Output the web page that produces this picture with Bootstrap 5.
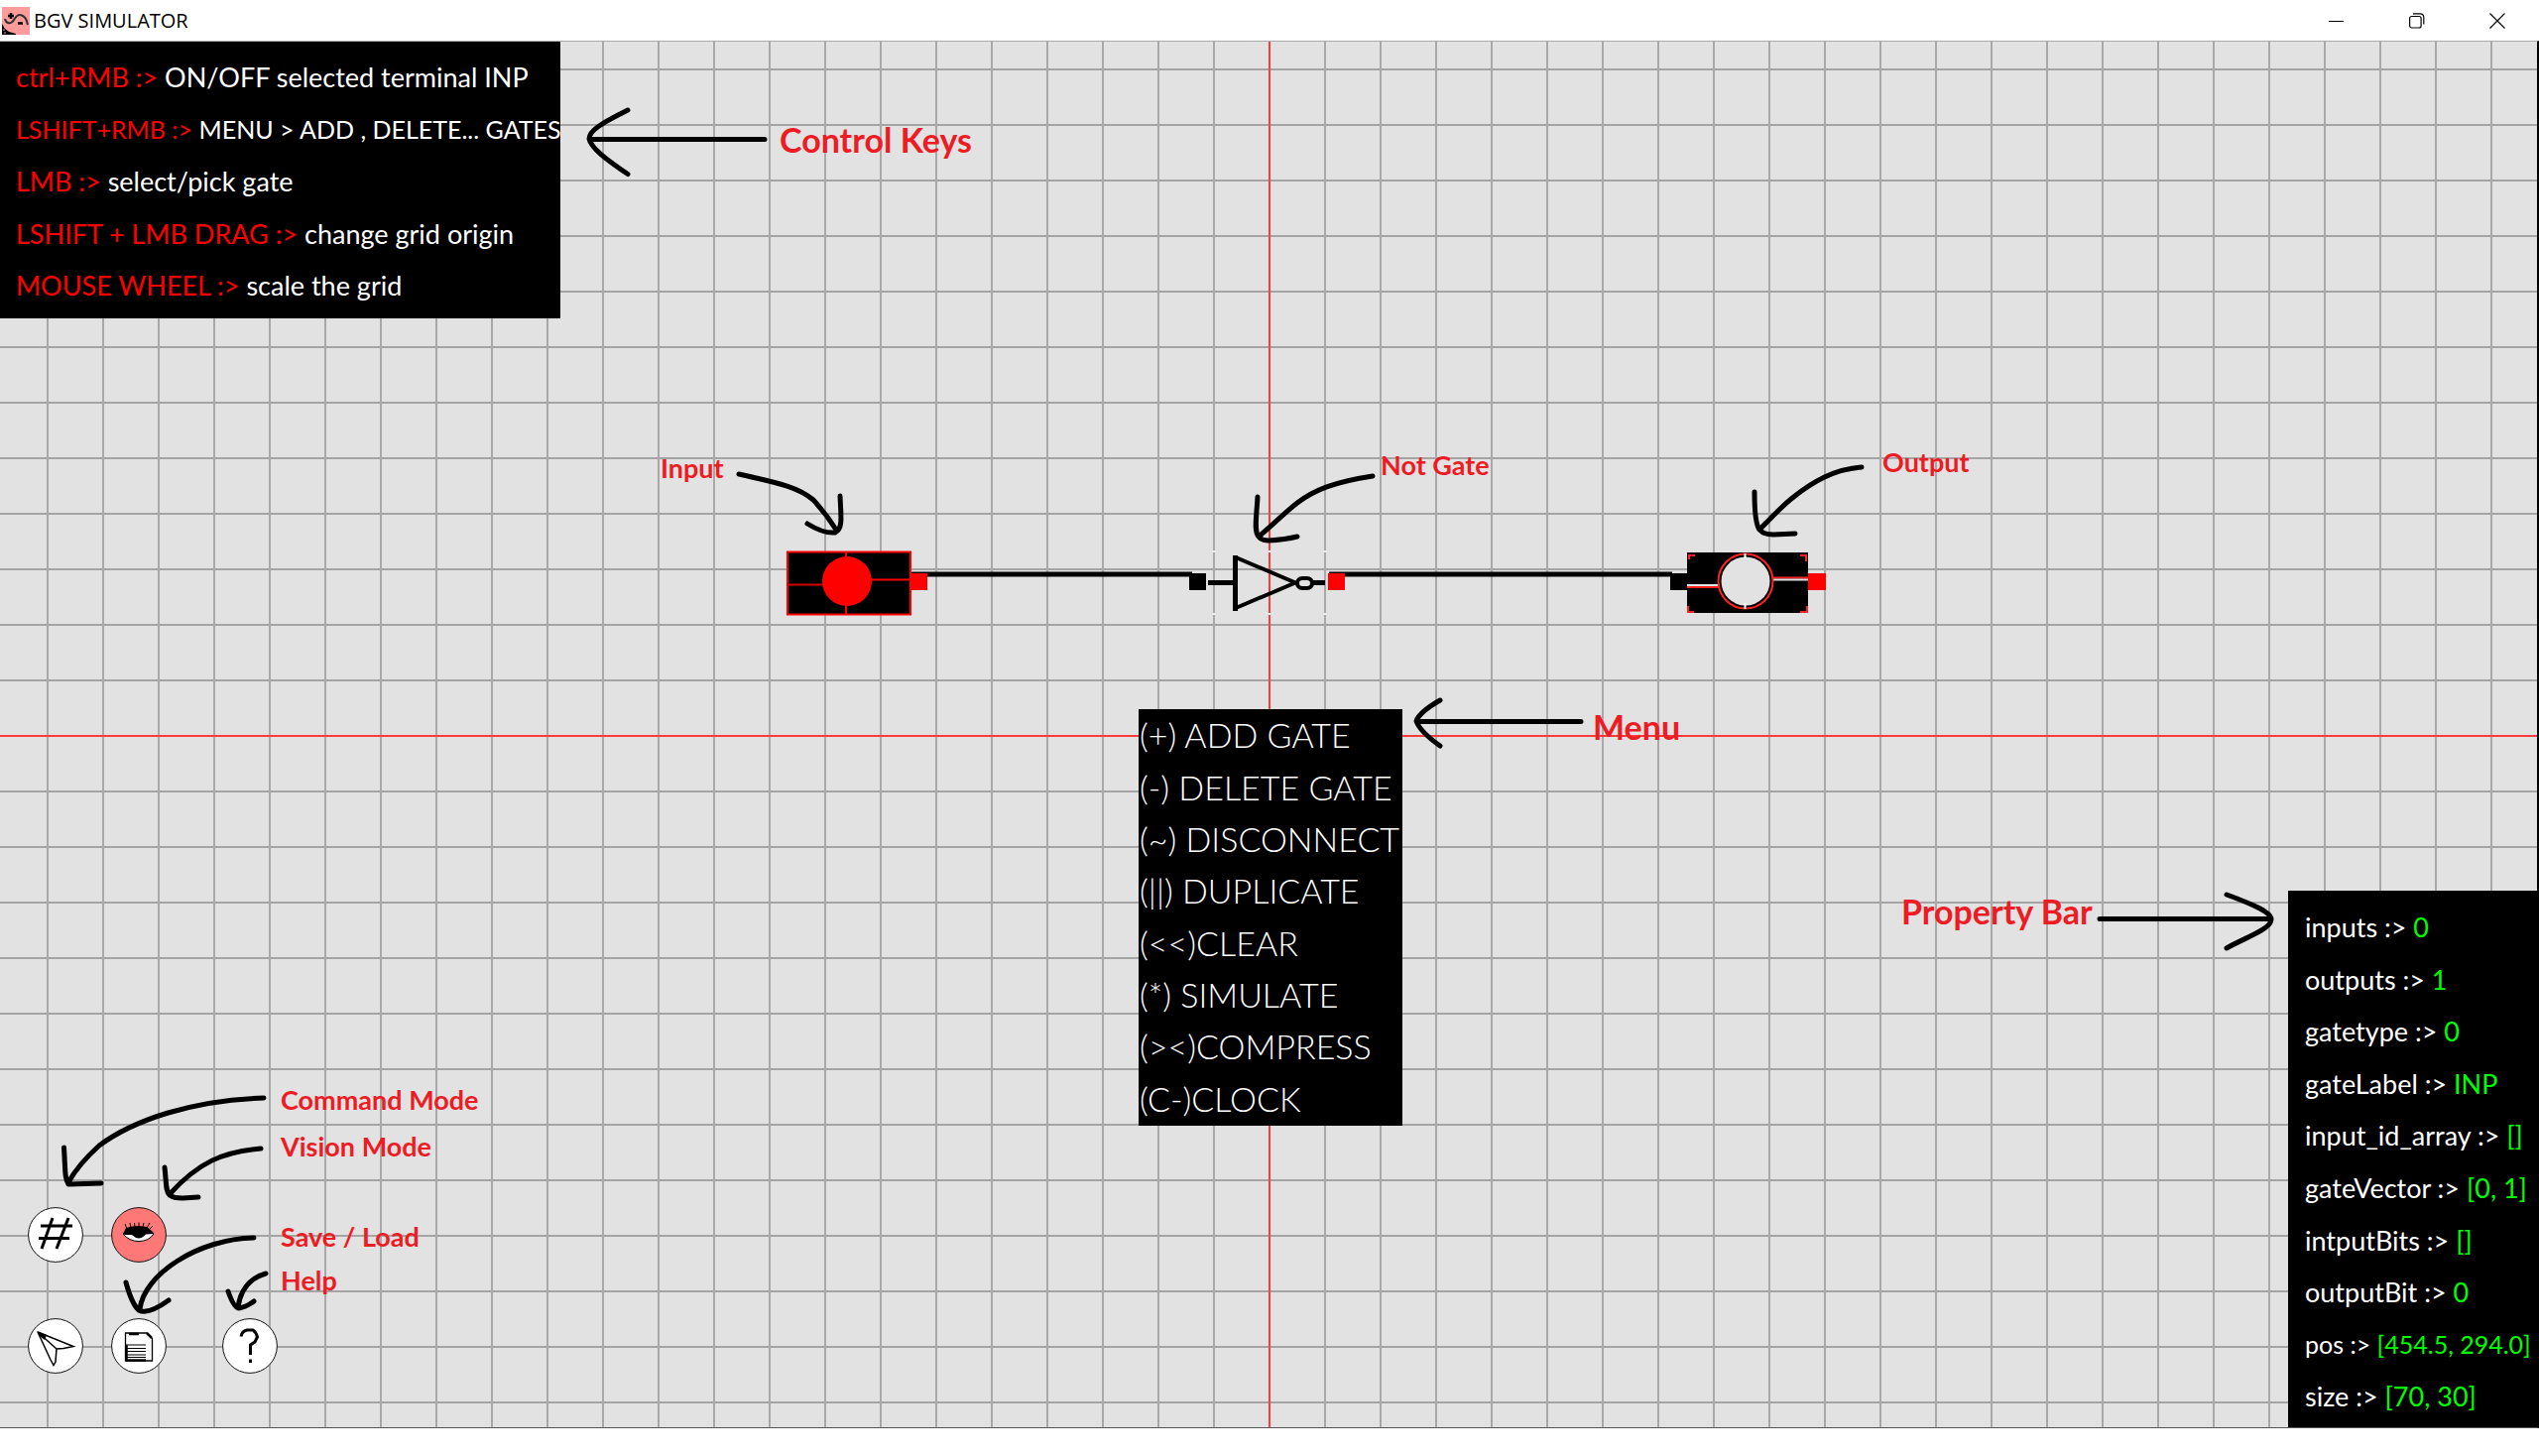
<!DOCTYPE html>
<html lang="en">
<head>
<meta charset="utf-8">
<meta name="viewport" content="width=device-width, initial-scale=1">
<title>BGV SIMULATOR</title>
<link rel="stylesheet" href="https://cdn.jsdelivr.net/npm/bootstrap@5.3.0/dist/css/bootstrap.min.css">
<style>
  body { font-family: Lato, "Open Sans", sans-serif; color: #000; }
  .titlebar { height: 41px; padding: 0 2px; font-family: "Open Sans", sans-serif; font-size: 20px; }
  .win-btn { width: 81px; height: 39px; }
  .desk-strip { height: 28px; }

  .sim-canvas {
    border-right: 2px solid #000;
    border-bottom: 1px solid #555;
    border-top: 1px solid #aaa;
    background-color: #e2e2e2;
    background-origin: border-box;
    background-clip: border-box;
    background-image:
      linear-gradient(#ff3c3c, #ff3c3c),
      linear-gradient(#ff3c3c, #ff3c3c),
      linear-gradient(90deg, transparent 27px, #a8a8a8 27px, #a8a8a8 29px, transparent 29px),
      linear-gradient(transparent 27px, #a4a4a4 27px, #a4a4a4 29px, transparent 29px);
    background-size: 2px 100%, 100% 2px, 56px 56px, 56px 56px;
    background-position: 50% 0, 0 700px, 50% 1px, 50% 1px;
    background-repeat: no-repeat, no-repeat, repeat, repeat;
  }

  .hud { background: #000; color: #fff; font-weight: 400; font-size: 27px; white-space: nowrap; }
  .hud-line { display: flex; align-items: center; flex: 1 1 0; white-space: pre; margin: 0; }
  .hud-long { font-size: 25px; }
  .hud-keys { top: -1px; left: 0; width: 565px; height: 280px; padding: 11px 0 6px 16px; }
  .hud-keys b { font-weight: 400; color: #f00; }
  .hud-props { right: -2px; bottom: 0; width: 253px; height: 541px; padding: 11px 0 4px 17px; }
  .hud-props b { font-weight: 400; color: #0f0; }
  .hud-menu { left: calc(50% - 131px); top: 673px; width: 266px; height: 420px; font-size: 34px; font-weight: 300; padding: 0 0 1px 1px; }
  .hud-menu button { border: 0; padding: 0; background: none; color: inherit; font: inherit; text-align: left; line-height: 1; }
  .hud-menu button:hover { color: #ff7878; }

  .tools { left: 28px; bottom: 54px; gap: 56px; }
  .tool-row { gap: 28px; }
  .tool { width: 56px; height: 56px; padding: 0; border: 0; background: none; border-radius: 50%; }
  .tool-help { margin-left: 28px; }
  .tool svg { display: block; }

  .notes { overflow: visible; pointer-events: none; }
  .notes text { fill: #ed1c24; font-weight: 700; font-size: 27px; }
  .notes .note-lg { font-size: 34px; }
  .ink { fill: none; stroke: #000; stroke-width: 5; stroke-linecap: round; stroke-linejoin: round; }
  .notes-scene { left: calc(50% - 639px); top: 399px; }
  .notes-keys { left: 580px; top: 49px; }
  .notes-props { right: 268px; bottom: 470px; }
  .notes-tools { left: 40px; bottom: 100px; }
</style>
<script src="https://cdn.jsdelivr.net/npm/bootstrap@5.3.0/dist/js/bootstrap.bundle.min.js"></script>
</head>
<body class="d-flex flex-column vh-100 bg-white overflow-hidden">

<header class="titlebar d-flex align-items-start bg-white">
  <div class="d-flex align-items-center h-100 me-auto">
    <svg width="28" height="28" viewBox="0 0 28 28" aria-hidden="true">
      <rect width="28" height="28" fill="#ff9b9b"/>
      <path d="M3 12C4 17 9 18 12 13S17 7 21 9S25 15 26 18" fill="none" stroke="#333" stroke-width="2"/>
      <path d="M9 6V12M6 9H12M16 16.500H21" stroke="#000" stroke-width="2.500"/>
      <path d="M0 17L3 22L7 25L14 27V28H0Z"/>
      <path d="M1 23H3M2 26H4" stroke="#ff9b9b"/>
    </svg>
    <span class="ms-1">BGV SIMULATOR</span>
  </div>
  <button class="win-btn btn p-0 border-0" aria-label="Minimize"><svg width="16" height="16" viewBox="0 0 16 16"><path d="M0 8.500H15" stroke="#000"/></svg></button>
  <button class="win-btn btn p-0 border-0" aria-label="Restore"><svg width="16" height="16" viewBox="0 0 16 16" fill="none" stroke="#000" stroke-width="1.200"><rect x=".6" y="3.500" width="11.500" height="11.500" rx="2"/><path d="M4 .8H11Q14.800 .8 14.800 4.500V11.500"/></svg></button>
  <button class="win-btn btn p-0 border-0" aria-label="Close"><svg width="16" height="16" viewBox="0 0 16 16"><path d="M.5 .5L15.500 15.500M15.500 .5L.5 15.500" stroke="#000" stroke-width="1.200"/></svg></button>
</header>

<main class="sim-canvas position-relative flex-fill overflow-hidden">

  <!-- circuit with its callouts -->
  <svg class="notes notes-scene position-absolute" width="1400" height="400" viewBox="640 441 1400 400">
    <path d="M918 579H1202M1340 579H1686" stroke="#000" stroke-width="5"/>

    <rect x="794" y="556.500" width="124" height="63" fill="#000" stroke="#f00" stroke-width="2"/>
    <path d="M853 557V619M854 584.500H918" stroke="#f00" stroke-width="2"/>
    <path d="M794 589.500H840" stroke="#d00000" stroke-width="2"/>
    <circle cx="854" cy="586" r="25" fill="#f00"/>
    <rect x="918" y="578" width="17" height="17" fill="#f00"/>

    <path d="M1224 555V557M1280 555V557M1336 555V557M1224 618V620M1280 618V620M1336 618V620" stroke="#eee" stroke-width="3"/>
    <rect x="1199" y="578" width="17" height="17"/>
    <path d="M1218 587.500H1244M1324 587.500H1336" stroke="#000" stroke-width="5"/>
    <path d="M1246 562L1306 587.500L1246 613" fill="none" stroke="#000" stroke-width="4"/>
    <path d="M1245.500 560V616" stroke="#000" stroke-width="5"/>
    <rect x="1308" y="583" width="15" height="10" rx="5" fill="#e2e2e2" stroke="#000" stroke-width="4"/>
    <rect x="1339" y="578" width="17" height="17" fill="#f00"/>

    <rect x="1684" y="578" width="17" height="17"/>
    <rect x="1701" y="557" width="122" height="61"/>
    <path d="M1701 592H1734M1787 582.500H1823" stroke="#f22" stroke-width="2"/>
    <path d="M1701 590H1734M1787 584.500H1823" stroke="#e2e2e2" stroke-width="2"/>
    <circle cx="1760" cy="586" r="24.500" fill="#e2e2e2"/>
    <circle cx="1760" cy="586" r="27.500" fill="none" stroke="#f22" stroke-width="2"/>
    <path d="M1759.500 558V563M1759.500 608V614" stroke="#fff" stroke-width="2"/>
    <path d="M1703 564V560H1709M1815 560H1821V566M1702 611V617H1708M1815 617H1822V611" fill="none" stroke="#f22" stroke-width="2"/>
    <rect x="1823" y="578" width="18" height="17" fill="#f00"/>

    <g class="ink">
      <path d="M745 478C785 487 805 491 820 504C832 517 838 526 843 534M814 528Q830 538 842 537C850 533 848 522 847 500"/>
      <path d="M1384 480C1345 486 1325 494 1308 507C1295 517 1285 528 1269 541M1268 501C1267 520 1264 536 1269 541Q1272 545 1279 545Q1296 544 1308 541"/>
      <path d="M1877 471C1850 473 1828 485 1806 503C1795 512 1785 523 1774 534M1769 496C1769 520 1771 530 1774 534Q1778 539 1788 539L1810 538"/>
      <path d="M1430 727.500H1594M1452 706Q1431 718 1428 727Q1432 738 1452 752"/>
    </g>
    <text x="666" y="482">Input</text>
    <text x="1392" y="479">Not Gate</text>
    <text x="1898" y="476">Output</text>
    <text x="1606" y="746" class="note-lg">Menu</text>
  </svg>

  <!-- control keys -->
  <section class="hud hud-keys position-absolute d-flex flex-column" aria-label="Control keys">
    <p class="hud-line"><b>ctrl+RMB :&gt; </b>ON/OFF selected terminal INP</p>
    <p class="hud-line hud-long"><b>LSHIFT+RMB :&gt; </b>MENU &gt; ADD , DELETE... GATES</p>
    <p class="hud-line"><b>LMB :&gt; </b>select/pick gate</p>
    <p class="hud-line"><b>LSHIFT + LMB DRAG :&gt; </b>change grid origin</p>
    <p class="hud-line"><b>MOUSE WHEEL :&gt; </b>scale the grid</p>
  </section>
  <svg class="notes notes-keys position-absolute" width="420" height="100" viewBox="580 91 420 100">
    <path class="ink" d="M596 140.500H771M633 111C605 125 594 132 594 140C596 149 610 160 633 175.500"/>
    <text x="786" y="154" class="note-lg">Control Keys</text>
  </svg>

  <!-- context menu -->
  <nav class="hud hud-menu position-absolute d-flex flex-column" aria-label="Menu">
    <button class="hud-line">(+) ADD GATE</button>
    <button class="hud-line">(-) DELETE GATE</button>
    <button class="hud-line">(~) DISCONNECT</button>
    <button class="hud-line">(||) DUPLICATE</button>
    <button class="hud-line">(&lt;&lt;)CLEAR</button>
    <button class="hud-line">(*) SIMULATE</button>
    <button class="hud-line">(&gt;&lt;)COMPRESS</button>
    <button class="hud-line">(C-)CLOCK</button>
  </nav>

  <!-- property bar -->
  <section class="hud hud-props position-absolute d-flex flex-column" aria-label="Property bar">
    <p class="hud-line">inputs :&gt; <b>0</b></p>
    <p class="hud-line">outputs :&gt; <b>1</b></p>
    <p class="hud-line">gatetype :&gt; <b>0</b></p>
    <p class="hud-line">gateLabel :&gt; <b>INP</b></p>
    <p class="hud-line">input_id_array :&gt; <b>[]</b></p>
    <p class="hud-line">gateVector :&gt; <b>[0, 1]</b></p>
    <p class="hud-line">intputBits :&gt; <b>[]</b></p>
    <p class="hud-line">outputBit :&gt; <b>0</b></p>
    <p class="hud-line hud-long">pos :&gt; <b>[454.5, 294.0]</b></p>
    <p class="hud-line">size :&gt; <b>[70, 30]</b></p>
  </section>
  <svg class="notes notes-props position-absolute" width="390" height="79" viewBox="1900 890 390 79">
    <path class="ink" d="M2117 926.500H2290M2245 902C2275 913 2290 920 2290 927C2290 937 2262 946 2245 956"/>
    <text x="1917" y="932" class="note-lg">Property Bar</text>
  </svg>

  <!-- mode and file tools -->
  <div class="tools position-absolute d-flex flex-column">
    <div class="tool-row d-flex">
      <button class="tool" aria-label="Command mode"><svg width="56" height="56" viewBox="0 0 56 56">
        <circle cx="28" cy="28" r="27.400" fill="#fff" stroke="#111"/>
        <path d="M13 19H45M11 31.500H42M25 11L14 42M41 11L29 42" stroke="#000" stroke-width="3"/></svg></button>
      <button class="tool" aria-label="Vision mode"><svg width="56" height="56" viewBox="0 0 56 56">
        <circle cx="28" cy="28" r="27.400" fill="#ff7878" stroke="#111"/>
        <path d="M12 27Q18 34.500 28 34.500T43 27Q36 22 28 23Q18 22 12 27Z" fill="#fff" stroke="#000"/>
        <path d="M12 27L15 21L21 19.500L28 19L36 20L41 24L43.500 27L35 27.500Q28 35 21 28L14 28Z"/>
        <path d="M16 22L14 17M20 21L19 16M24 20L23.500 16M28 20V15.500M32 20L33 16M36 21L39 16M39 22L42 19" stroke="#000"/></svg></button>
    </div>
    <div class="tool-row d-flex">
      <button class="tool" aria-label="Select"><svg width="56" height="56" viewBox="0 0 56 56">
        <circle cx="28" cy="28" r="27.400" fill="#fff" stroke="#111"/>
        <path d="M10 14L46 28.500L36 30.500L29 31L28 44L26 47.500L23 42L10 14L29 31" fill="none" stroke="#000" stroke-width="1.500"/>
        <path d="M9 13L19 17L17 22L13 19Z"/></svg></button>
      <button class="tool" aria-label="Save or load"><svg width="56" height="56" viewBox="0 0 56 56">
        <circle cx="28" cy="28" r="27.400" fill="#fff" stroke="#111"/>
        <path d="M14.500 15H36L41.500 20.500V43H14.500Z" fill="none" stroke="#000" stroke-width="1.300"/>
        <path d="M18 16H28M36 15L41 20M15.500 27V43M15 42.500H35" stroke="#000" stroke-width="2.500"/>
        <path d="M15 27H35M15 30.500H35M15 33.500H35M15 37H35M15 39.500H35" stroke="#000" stroke-width="1.200"/></svg></button>
      <button class="tool tool-help" aria-label="Help"><svg width="56" height="56" viewBox="0 0 56 56">
        <circle cx="28" cy="28" r="27.400" fill="#fff" stroke="#111"/>
        <path d="M19 18.500Q20 13 25 12H31Q34 14 35.500 19L33 24L28.500 27V37M28.500 41.500V45" fill="none" stroke="#000" stroke-width="3"/></svg></button>
    </div>
  </div>
  <svg class="notes notes-tools position-absolute" width="460" height="260" viewBox="40 1079 460 260">
    <g class="ink">
      <path d="M266 1107C195 1109 135 1129 100 1155Q79 1174 69 1192M64.500 1157C66 1180 65 1188 69 1194L102 1193"/>
      <path d="M263 1158C225 1161 200 1172 171 1204M166 1177C168 1195 167 1201 171 1205Q175 1208 184 1208L200 1207"/>
      <path d="M256 1248C200 1249 145 1285 141 1320M127 1293Q133 1315 140 1321Q149 1326 170 1311"/>
      <path d="M268 1284C250 1289 242 1303 240 1318M230 1302Q236 1319 241 1319Q248 1318 256 1312"/>
    </g>
    <text x="283" y="1119">Command Mode</text>
    <text x="283" y="1166">Vision Mode</text>
    <text x="283" y="1257">Save / Load</text>
    <text x="283" y="1301">Help</text>
  </svg>
</main>

<footer class="desk-strip bg-white"></footer>
</body>
</html>
